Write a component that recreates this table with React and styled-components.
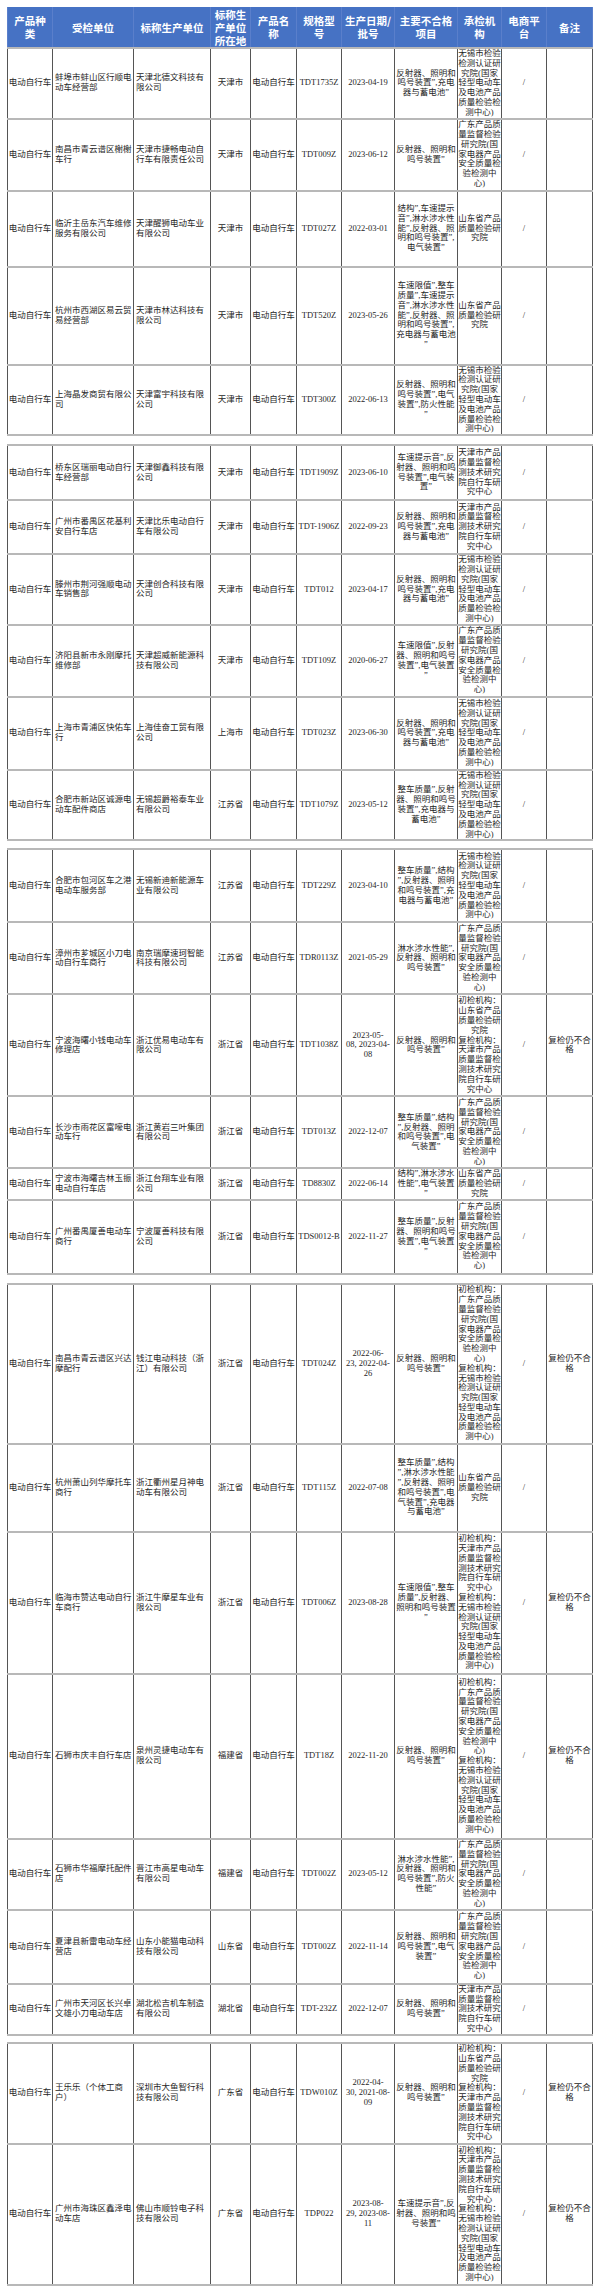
import React from 'react';
import styled, { createGlobalStyle } from 'styled-components';

const GlobalStyle = createGlobalStyle`
  html, body {
    margin: 0;
    padding: 0;
    background: #fff;
  }
  body {
    font-family: "Liberation Serif", "Noto Sans CJK SC", serif;
    color: #262626;
  }
`;

const Page = styled.div`
  width: 600px;
  box-sizing: border-box;
  padding: 7px 8px 0 7px;
  display: flex;
  flex-direction: column;
`;

const Sheet = styled.table`
  width: 585px;
  table-layout: fixed;
  border-collapse: collapse;
  margin-top: ${p => p.$gap || 0}px;
  border-left: 1px solid #555;
  border-right: 1px solid #555;
  border-bottom: 2px solid #8a8a8a;
`;

const Row = styled.tr`
  height: ${p => p.$h}px;
`;

const HeadCell = styled.th`
  background: #4672c4;
  color: #fff;
  font-family: "Noto Sans CJK SC", sans-serif;
  font-weight: 700;
  font-size: 10.5px;
  line-height: 13px;
  text-align: center;
  vertical-align: middle;
  padding: 0;
  white-space: pre;
  border-left: 1px solid #5a7fcb;
  border-right: 1px solid #5a7fcb;
`;

const Cell = styled.td`
  padding: 0;
  padding-left: ${p => (p.$align === 'left' ? '2px' : '0')};
  border-left: 1px solid #555;
  border-right: 1px solid #555;
  border-top: 2px solid #b8b8b8;
  border-bottom: 2px solid #b8b8b8;
  font-size: 8.5px;
  line-height: 9.8px;
  text-align: ${p => p.$align || 'center'};
  vertical-align: middle;
  white-space: pre;
`;

const widths = [45, 81, 77, 40, 46, 45, 53, 63, 44, 45, 46];

const heads = [
  '产品种\n类', '受检单位', '标称生产单位', '标称生\n产单位\n所在地', '产品名\n称',
  '规格型\n号', '生产日期/\n批号', '主要不合格\n项目', '承检机\n构', '电商平\n台', '备注',
];

const WX = '无锡市检验\n检测认证研\n究院(国家\n轻型电动车\n及电池产品\n质量检验检\n测中心)';
const GD = '广东产品质\n量监督检验\n研究院(国\n家电器产品\n安全质量检\n验检测中\n心)';
const SD = '山东省产品\n质量检验研\n究院';
const TJ = '天津市产品\n质量监督检\n测技术研究\n院自行车研\n究中心';
const both = (a, b) => `初检机构：\n${a}\n复检机构：\n${b}`;
const RE = '复检仍不合\n格';

const blocks = [
  {
    gap: 0,
    head: true,
    rows: [
      [70, '蚌埠市蚌山区行顺电\n动车经营部', '天津北德文科技有\n限公司', '天津市', 'TDT1735Z', '2023-04-19', '反射器、照明和\n鸣号装置”,充电\n器与蓄电池”', WX],
      [72, '南昌市青云谱区榭榭\n车行', '天津市捷畅电动自\n行车有限责任公司', '天津市', 'TDT009Z', '2023-06-12', '反射器、照明和\n鸣号装置”', GD],
      [76, '临沂主岳东汽车维修\n服务有限公司', '天津醒狮电动车业\n有限公司', '天津市', 'TDT027Z', '2022-03-01', '结构”,车速提示\n音”,淋水涉水性\n能”,反射器、照\n明和鸣号装置”,\n电气装置”', SD],
      [98, '杭州市西湖区易云贸\n易经营部', '天津市林达科技有\n限公司', '天津市', 'TDT520Z', '2023-05-26', '车速限值”,整车\n质量”,车速提示\n音”,淋水涉水性\n能”,反射器、照\n明和鸣号装置”,\n充电器与蓄电池\n”', SD],
      [70, '上海晶发商贸有限公\n司', '天津富宇科技有限\n公司', '天津市', 'TDT300Z', '2022-06-13', '反射器、照明和\n鸣号装置”,电气\n装置”,防火性能\n”', WX],
    ],
  },
  {
    gap: 8,
    rows: [
      [55, '桥东区瑞丽电动自行\n车经营部', '天津御鑫科技有限\n公司', '天津市', 'TDT1909Z', '2023-06-10', '车速提示音”,反\n射器、照明和鸣\n号装置”,电气装\n置”', TJ],
      [54, '广州市番禺区花基利\n安自行车店', '天津比乐电动自行\n车有限公司', '天津市', 'TDT-1906Z', '2022-09-23', '反射器、照明和\n鸣号装置”,充电\n器与蓄电池”', TJ],
      [68, '滕州市荆河强顺电动\n车销售部', '天津创合科技有限\n公司', '天津市', 'TDT012', '2023-04-17', '反射器、照明和\n鸣号装置”,充电\n器与蓄电池”', WX],
      [72, '济阳县新市永刚摩托\n维修部', '天津超威新能源科\n技有限公司', '天津市', 'TDT109Z', '2020-06-27', '车速限值”,反射\n器、照明和鸣号\n装置”,电气装置\n”', GD],
      [73, '上海市青浦区快佑车\n行', '上海佳奋工贸有限\n公司', '上海市', 'TDT023Z', '2023-06-30', '反射器、照明和\n鸣号装置”,充电\n器与蓄电池”', WX],
      [70, '合肥市新站区诚源电\n动车配件商店', '无锡超爵裕泰车业\n有限公司', '江苏省', 'TDT1079Z', '2023-05-12', '整车质量”,反射\n器、照明和鸣号\n装置”,充电器与\n蓄电池”', WX],
    ],
  },
  {
    gap: 7,
    rows: [
      [73, '合肥市包河区车之港\n电动车服务部', '无锡新迪新能源车\n业有限公司', '江苏省', 'TDT229Z', '2023-04-10', '整车质量”,结构\n”,反射器、照明\n和鸣号装置”,充\n电器与蓄电池”', WX],
      [72, '漳州市芗城区小刀电\n动自行车商行', '南京瑞摩速珂智能\n科技有限公司', '江苏省', 'TDR0113Z', '2021-05-29', '淋水涉水性能”,\n反射器、照明和\n鸣号装置”', GD],
      [102, '宁波海曙小钱电动车\n修理店', '浙江优易电动车有\n限公司', '浙江省', 'TDT1038Z', '2023-05-\n08, 2023-04-\n08', '反射器、照明和\n鸣号装置”', both(SD, TJ), RE],
      [72, '长沙市雨花区富嚎电\n动车行', '浙江黄岩三叶集团\n有限公司', '浙江省', 'TDT013Z', '2022-12-07', '整车质量”,结构\n”,反射器、照明\n和鸣号装置”,电\n气装置”', GD],
      [31, '宁波市海曙吉林玉振\n电动自行车店', '浙江台翔车业有限\n公司', '浙江省', 'TD8830Z', '2022-06-14', '结构”,淋水涉水\n性能”,电气装置\n”', SD],
      [74, '广州番禺厦善电动车\n商行', '宁波厦善科技有限\n公司', '浙江省', 'TDS0012-B', '2022-11-27', '整车质量”,反射\n器、照明和鸣号\n装置”,电气装置\n”', GD],
    ],
  },
  {
    gap: 8,
    rows: [
      [160, '南昌市青云谱区兴达\n摩配行', '钱江电动科技（浙\n江）有限公司', '浙江省', 'TDT024Z', '2022-06-\n23, 2022-04-\n26', '反射器、照明和\n鸣号装置”', both(GD, WX), RE],
      [88, '杭州萧山列华摩托车\n商行', '浙江衢州星月神电\n动车有限公司', '浙江省', 'TDT115Z', '2022-07-08', '整车质量”,结构\n”,淋水涉水性能\n”,反射器、照明\n和鸣号装置”,电\n气装置”,充电器\n与蓄电池”', SD],
      [142, '临海市赞达电动自行\n车商行', '浙江牛摩星车业有\n限公司', '浙江省', 'TDT006Z', '2023-08-28', '车速限值”,整车\n质量”,反射器、\n照明和鸣号装置\n”', both(TJ, WX), RE],
      [165, '石狮市庆丰自行车店', '泉州灵捷电动车有\n限公司', '福建省', 'TDT18Z', '2022-11-20', '反射器、照明和\n鸣号装置”', both(GD, WX), RE],
      [71, '石狮市华福摩托配件\n店', '晋江市高星电动车\n有限公司', '福建省', 'TDT002Z', '2023-05-12', '淋水涉水性能”,\n反射器、照明和\n鸣号装置”,防火\n性能”', GD],
      [74, '夏津县新雷电动车经\n营店', '山东小能猫电动科\n技有限公司', '山东省', 'TDT002Z', '2022-11-14', '反射器、照明和\n鸣号装置”,电气\n装置”', GD],
      [50, '广州市天河区长兴卓\n文雄小刀电动车店', '湖北松吉机车制造\n有限公司', '湖北省', 'TDT-232Z', '2022-12-07', '反射器、照明和\n鸣号装置”', TJ],
    ],
  },
  {
    gap: 6,
    rows: [
      [101, '王乐乐（个体工商\n户）', '深圳市大鱼智行科\n技有限公司', '广东省', 'TDW010Z', '2022-04-\n30, 2021-08-\n09', '反射器、照明和\n鸣号装置”', both(SD, TJ), RE],
      [141, '广州市海珠区鑫泽电\n动车店', '佛山市顺铃电子科\n技有限公司', '广东省', 'TDP022', '2023-08-\n29, 2023-08-\n11', '车速提示音”,反\n射器、照明和鸣\n号装置”', both(TJ, WX), RE],
    ],
  },
];

function Block({ gap, head, rows }) {
  return (
    <Sheet $gap={gap}>
      <colgroup>
        {widths.map((w, i) => <col key={i} style={{ width: w }} />)}
      </colgroup>
      <tbody>
        {head && (
          <Row $h={41}>
            {heads.map(h => <HeadCell key={h}>{h}</HeadCell>)}
          </Row>
        )}
        {rows.map(([h, shop, maker, loc, model, date, fail, lab, note]) => (
          <Row $h={h} key={shop}>
            <Cell>电动自行车</Cell>
            <Cell $align="left">{shop}</Cell>
            <Cell $align="left">{maker}</Cell>
            <Cell>{loc}</Cell>
            <Cell>电动自行车</Cell>
            <Cell>{model}</Cell>
            <Cell>{date}</Cell>
            <Cell>{fail}</Cell>
            <Cell>{lab}</Cell>
            <Cell>/</Cell>
            <Cell>{note || ''}</Cell>
          </Row>
        ))}
      </tbody>
    </Sheet>
  );
}

export default function App() {
  return (
    <>
      <GlobalStyle />
      <Page>
        {blocks.map((b, i) => <Block key={i} {...b} />)}
      </Page>
    </>
  );
}
